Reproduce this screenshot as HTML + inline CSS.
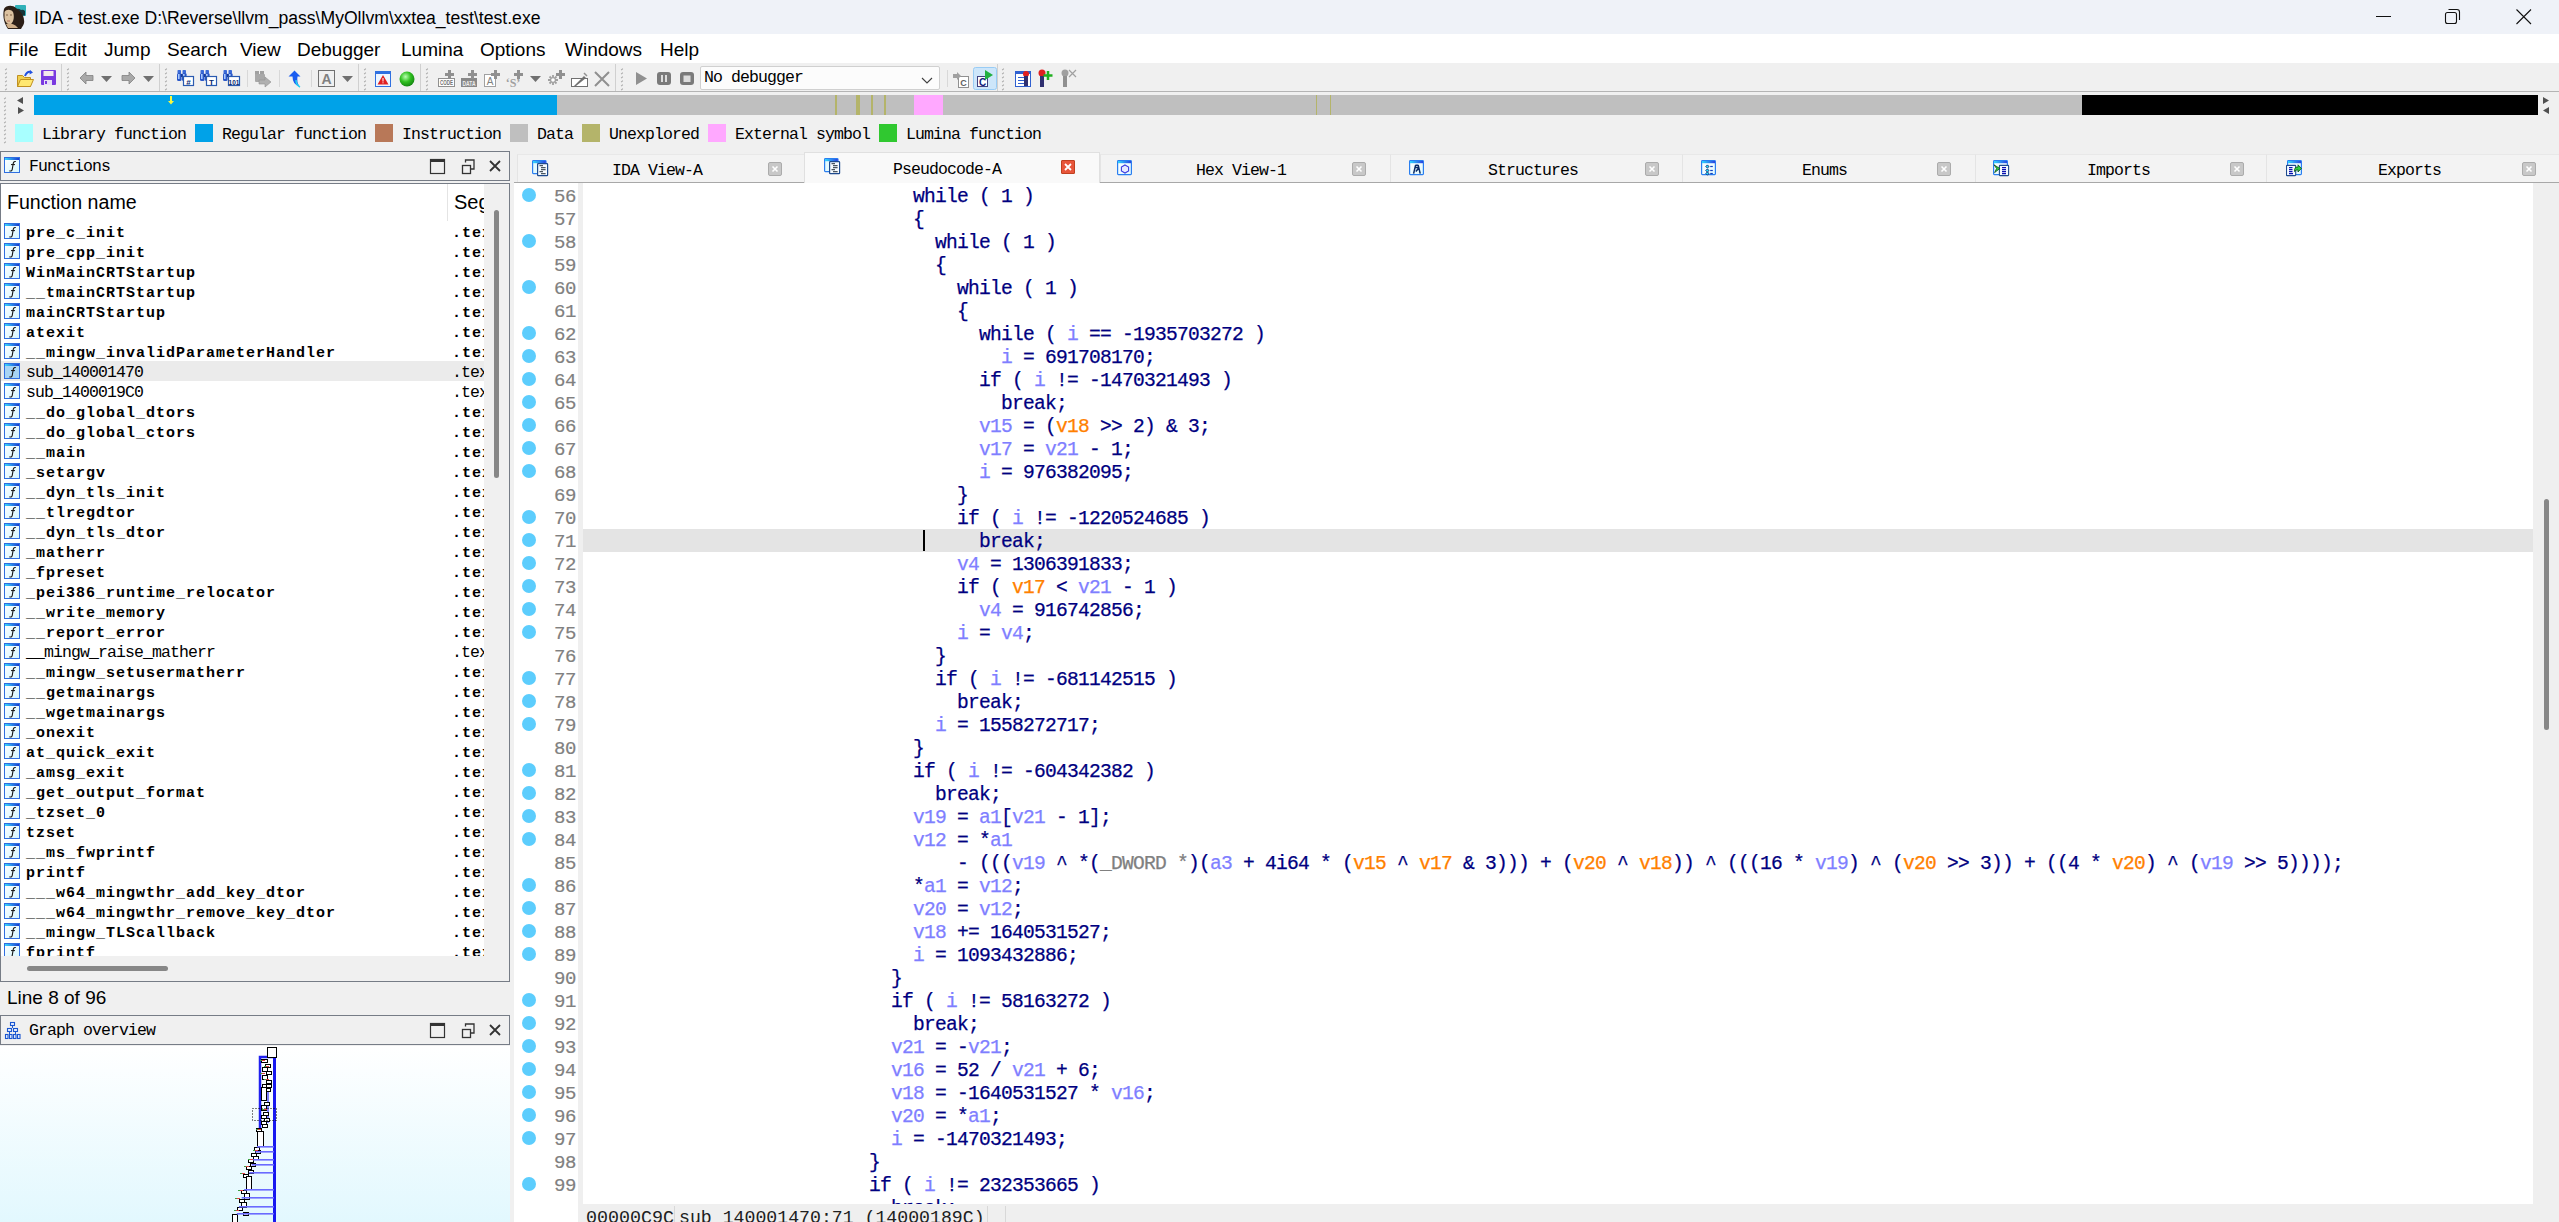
<!DOCTYPE html><html><head><meta charset="utf-8"><title>IDA</title><style>
*{margin:0;padding:0;box-sizing:border-box}
html,body{width:2559px;height:1222px;overflow:hidden}
body{position:relative;background:#f0f0f0;font-family:"Liberation Sans",sans-serif;color:#000}
.a{position:absolute}
.mono{font-family:"Liberation Mono",monospace}
.sim{font-family:"Liberation Mono",monospace;font-size:16.5px;letter-spacing:-0.9px;line-height:20px;white-space:pre}
.code{font-family:"Liberation Mono",monospace;font-size:19.6px;letter-spacing:-0.76px;line-height:23px;white-space:pre;color:#000080;-webkit-text-stroke:0.25px currentColor}
.k{color:#000080}
.v{color:#7f7fff}
.o{color:#ff8000}
.g{color:#808080}
.ln{font-family:"Liberation Mono",monospace;font-size:19px;letter-spacing:-0.4px;line-height:23px;color:#808080;text-align:right;width:60px;-webkit-text-stroke:0.2px currentColor}
.dot{width:14px;height:14px;border-radius:50%;background:#5ccdfd}
.fi{width:16px;height:16px;border:1px solid #2f6fe0;background:linear-gradient(#e8fbff,#d8f4ff)}
.fi:before{content:"";position:absolute;left:0;top:0;right:0;height:2px;background:linear-gradient(90deg,#30d0f8,#2040d0)}

.fn{font-family:"Liberation Mono",monospace;font-size:15px;white-space:pre;line-height:20px}
.fb{font-weight:bold;letter-spacing:1px}
.fr{font-size:16.5px;letter-spacing:-0.9px;margin-top:-1px}
.tab{font-family:"Liberation Mono",monospace;font-size:16.5px;letter-spacing:-0.9px;white-space:pre;color:#000}
.grip{width:3px;background:repeating-linear-gradient(#b8b8b8 0 2px,transparent 2px 5px)}
.vsep{width:1px;background:#c8c8c8}
.tcl{width:14px;height:14px;border-radius:2px;background:#c8c8c8;border:1px solid #a8a8a8}
.tcl:after{content:"\00d7";position:absolute;left:1px;top:-4px;font-size:15px;color:#fff;font-weight:bold;font-family:"Liberation Sans",sans-serif}
</style></head><body>
<svg width="0" height="0" style="position:absolute"><defs><linearGradient id="tbar" x1="0" x2="1"><stop offset="0" stop-color="#30d8ff"/><stop offset="1" stop-color="#2a40e0"/></linearGradient><linearGradient id="fbar" x1="0" x2="1"><stop offset="0" stop-color="#38d8ff"/><stop offset="1" stop-color="#1a3ad0"/></linearGradient><linearGradient id="fbg" x1="0" y1="0" x2="1" y2="1"><stop offset="0" stop-color="#ffffff"/><stop offset="1" stop-color="#d4f6ff"/></linearGradient><linearGradient id="tbg" x1="0" y1="0" x2="1" y2="1"><stop offset="0" stop-color="#ffffff"/><stop offset="1" stop-color="#e0faff"/></linearGradient></defs></svg>
<div class="a" style="left:0;top:0;width:2559px;height:34px;background:#eff2f8"></div>
<svg class="a" style="left:0;top:0" width="30" height="34" viewBox="0 0 30 34">
<rect x="15" y="5" width="11" height="11" rx="1" fill="#2fb0b8"/><path d="M16 9 Q19 8 21 10 Q23 9 25 11 V15.5 H16Z" fill="#163438"/>
<path d="M4 9 C6 5,13 5,16 8 C20 11,24 15,24 20 C25 24,22 27,21 29 L8 29 C5 25,2 17,4 9Z" fill="#2b1e16"/>
<path d="M4.5 12 C6 9,11 9,13 12 C14.5 16,14 21,11 24 C8 25,5 22,4.5 18 Z" fill="#dcc2a0"/>
<path d="M6 24 C9 23,14 23,18 28 L8 28Z" fill="#cfae88"/>
<path d="M6 15 h2 M10 15 h2" stroke="#6a4a30" stroke-width="0.8"/><path d="M7 21 h3" stroke="#b06050" stroke-width="0.8"/>
</svg>
<div class="a" style="left:34px;top:7px;font-size:17.6px;line-height:22px;color:#000">IDA - test.exe D:\Reverse\llvm_pass\MyOllvm\xxtea_test\test.exe</div>
<div class="a" style="left:2376px;top:16px;width:15px;height:1px;background:#111"></div>
<svg class="a" style="left:2440px;top:6px" width="24" height="22" viewBox="0 0 24 22">
<rect x="5.5" y="6.5" width="11" height="11" rx="2" fill="none" stroke="#111" stroke-width="1.1"/>
<path d="M8.5 3.5 H17 a2.5 2.5 0 0 1 2.5 2.5 V14" fill="none" stroke="#111" stroke-width="1.1"/></svg>
<svg class="a" style="left:2514px;top:7px" width="20" height="20" viewBox="0 0 20 20">
<path d="M2.5 2.5 L17 17 M17 2.5 L2.5 17" stroke="#111" stroke-width="1.1"/></svg>
<div class="a" style="left:0;top:34px;width:2559px;height:29px;background:#fff"></div>
<div class="a" style="left:8px;top:38px;font-size:19px;line-height:24px">File</div>
<div class="a" style="left:54px;top:38px;font-size:19px;line-height:24px">Edit</div>
<div class="a" style="left:104px;top:38px;font-size:19px;line-height:24px">Jump</div>
<div class="a" style="left:167px;top:38px;font-size:19px;line-height:24px">Search</div>
<div class="a" style="left:240px;top:38px;font-size:19px;line-height:24px">View</div>
<div class="a" style="left:297px;top:38px;font-size:19px;line-height:24px">Debugger</div>
<div class="a" style="left:401px;top:38px;font-size:19px;line-height:24px">Lumina</div>
<div class="a" style="left:480px;top:38px;font-size:19px;line-height:24px">Options</div>
<div class="a" style="left:565px;top:38px;font-size:19px;line-height:24px">Windows</div>
<div class="a" style="left:660px;top:38px;font-size:19px;line-height:24px">Help</div>
<div class="a" style="left:0;top:63px;width:2559px;height:29px;background:#f0f0f0;border-bottom:1px solid #b4b4b4"></div>
<svg class="a" style="left:0;top:0" width="1100" height="95" viewBox="0 0 1100 95"><path d="M5.2 70.2 l1.6 -1.6" stroke="#a8a8a8" stroke-width="1.1"/><path d="M5.2 74.2 l1.6 -1.6" stroke="#a8a8a8" stroke-width="1.1"/><path d="M5.2 78.2 l1.6 -1.6" stroke="#a8a8a8" stroke-width="1.1"/><path d="M5.2 82.2 l1.6 -1.6" stroke="#a8a8a8" stroke-width="1.1"/><path d="M5.2 86.2 l1.6 -1.6" stroke="#a8a8a8" stroke-width="1.1"/><path d="M5.2 90.2 l1.6 -1.6" stroke="#a8a8a8" stroke-width="1.1"/><path d="M67.2 70.2 l1.6 -1.6" stroke="#a8a8a8" stroke-width="1.1"/><path d="M67.2 74.2 l1.6 -1.6" stroke="#a8a8a8" stroke-width="1.1"/><path d="M67.2 78.2 l1.6 -1.6" stroke="#a8a8a8" stroke-width="1.1"/><path d="M67.2 82.2 l1.6 -1.6" stroke="#a8a8a8" stroke-width="1.1"/><path d="M67.2 86.2 l1.6 -1.6" stroke="#a8a8a8" stroke-width="1.1"/><path d="M67.2 90.2 l1.6 -1.6" stroke="#a8a8a8" stroke-width="1.1"/><path d="M165.2 70.2 l1.6 -1.6" stroke="#a8a8a8" stroke-width="1.1"/><path d="M165.2 74.2 l1.6 -1.6" stroke="#a8a8a8" stroke-width="1.1"/><path d="M165.2 78.2 l1.6 -1.6" stroke="#a8a8a8" stroke-width="1.1"/><path d="M165.2 82.2 l1.6 -1.6" stroke="#a8a8a8" stroke-width="1.1"/><path d="M165.2 86.2 l1.6 -1.6" stroke="#a8a8a8" stroke-width="1.1"/><path d="M165.2 90.2 l1.6 -1.6" stroke="#a8a8a8" stroke-width="1.1"/><path d="M364.2 70.2 l1.6 -1.6" stroke="#a8a8a8" stroke-width="1.1"/><path d="M364.2 74.2 l1.6 -1.6" stroke="#a8a8a8" stroke-width="1.1"/><path d="M364.2 78.2 l1.6 -1.6" stroke="#a8a8a8" stroke-width="1.1"/><path d="M364.2 82.2 l1.6 -1.6" stroke="#a8a8a8" stroke-width="1.1"/><path d="M364.2 86.2 l1.6 -1.6" stroke="#a8a8a8" stroke-width="1.1"/><path d="M364.2 90.2 l1.6 -1.6" stroke="#a8a8a8" stroke-width="1.1"/><path d="M426.2 70.2 l1.6 -1.6" stroke="#a8a8a8" stroke-width="1.1"/><path d="M426.2 74.2 l1.6 -1.6" stroke="#a8a8a8" stroke-width="1.1"/><path d="M426.2 78.2 l1.6 -1.6" stroke="#a8a8a8" stroke-width="1.1"/><path d="M426.2 82.2 l1.6 -1.6" stroke="#a8a8a8" stroke-width="1.1"/><path d="M426.2 86.2 l1.6 -1.6" stroke="#a8a8a8" stroke-width="1.1"/><path d="M426.2 90.2 l1.6 -1.6" stroke="#a8a8a8" stroke-width="1.1"/><path d="M621.2 70.2 l1.6 -1.6" stroke="#a8a8a8" stroke-width="1.1"/><path d="M621.2 74.2 l1.6 -1.6" stroke="#a8a8a8" stroke-width="1.1"/><path d="M621.2 78.2 l1.6 -1.6" stroke="#a8a8a8" stroke-width="1.1"/><path d="M621.2 82.2 l1.6 -1.6" stroke="#a8a8a8" stroke-width="1.1"/><path d="M621.2 86.2 l1.6 -1.6" stroke="#a8a8a8" stroke-width="1.1"/><path d="M621.2 90.2 l1.6 -1.6" stroke="#a8a8a8" stroke-width="1.1"/><path d="M1002.2 70.2 l1.6 -1.6" stroke="#a8a8a8" stroke-width="1.1"/><path d="M1002.2 74.2 l1.6 -1.6" stroke="#a8a8a8" stroke-width="1.1"/><path d="M1002.2 78.2 l1.6 -1.6" stroke="#a8a8a8" stroke-width="1.1"/><path d="M1002.2 82.2 l1.6 -1.6" stroke="#a8a8a8" stroke-width="1.1"/><path d="M1002.2 86.2 l1.6 -1.6" stroke="#a8a8a8" stroke-width="1.1"/><path d="M1002.2 90.2 l1.6 -1.6" stroke="#a8a8a8" stroke-width="1.1"/><rect x="61" y="64" width="1" height="27" fill="#d0d0d0"/><rect x="159" y="64" width="1" height="27" fill="#d0d0d0"/><rect x="358" y="64" width="1" height="27" fill="#d0d0d0"/><rect x="420" y="64" width="1" height="27" fill="#d0d0d0"/><rect x="615" y="64" width="1" height="27" fill="#d0d0d0"/><rect x="997" y="64" width="1" height="27" fill="#d0d0d0"/><rect x="247" y="70" width="1" height="17" fill="#d8d8d8"/><rect x="279" y="70" width="1" height="17" fill="#d8d8d8"/><rect x="311" y="70" width="1" height="17" fill="#d8d8d8"/><rect x="947" y="70" width="1" height="17" fill="#d8d8d8"/><path d="M17.5 75.5 h5 l2 2 h6 v9 h-13z" fill="#f0d050" stroke="#c09020"/><path d="M17.5 86.5 l3 -7 h13 l-3 7z" fill="#ffe870" stroke="#c09020"/><path d="M25 76 q2 -5 6 -4" stroke="#2050e0" stroke-width="2" fill="none"/><path d="M30 70 l3 2.5 l-3.5 2z" fill="#2050e0"/><rect x="41" y="70" width="15" height="15" fill="#7a3ae0" rx="1"/><rect x="43.5" y="71" width="10" height="5" fill="#f4e8ec"/><rect x="44" y="80" width="8" height="5" fill="#e8e0f8"/><rect x="45" y="81" width="2" height="3" fill="#7a3ae0"/><path d="M80 78 l6 -6 v3.5 h7 v5 h-7 v3.5z" fill="#a8a8a8" stroke="#808080" stroke-width="0.8"/><path d="M101 76 h11 l-5.5 6z" fill="#707070"/><path d="M135 78 l-6 -6 v3.5 h-7 v5 h7 v3.5z" fill="#a8a8a8" stroke="#808080" stroke-width="0.8"/><path d="M143 76 h11 l-5.5 6z" fill="#707070"/><rect x="177.5" y="70" width="3.5" height="3.5" rx="0.8" fill="#3a6ad8"/><rect x="182.5" y="70" width="3.5" height="3.5" rx="0.8" fill="#3a6ad8"/><rect x="177" y="73" width="4.6" height="8" rx="1.5" fill="#2a58c8"/><rect x="182" y="73" width="4.6" height="8" rx="1.5" fill="#2a58c8"/><rect x="178" y="74" width="1.6" height="5" fill="#a8c8ff"/><rect x="183" y="74" width="1.6" height="5" fill="#a8c8ff"/><rect x="181" y="74" width="1.5" height="3" fill="#1a3a90"/><rect x="183.5" y="76.5" width="10" height="9" fill="#fff" stroke="#2a5ab0" stroke-width="1.2"/><text x="188.5" y="84.6" font-size="8" font-family="Liberation Sans" font-weight="bold" text-anchor="middle" fill="#0a2a70">#</text><rect x="200.5" y="70" width="3.5" height="3.5" rx="0.8" fill="#3a6ad8"/><rect x="205.5" y="70" width="3.5" height="3.5" rx="0.8" fill="#3a6ad8"/><rect x="200" y="73" width="4.6" height="8" rx="1.5" fill="#2a58c8"/><rect x="205" y="73" width="4.6" height="8" rx="1.5" fill="#2a58c8"/><rect x="201" y="74" width="1.6" height="5" fill="#a8c8ff"/><rect x="206" y="74" width="1.6" height="5" fill="#a8c8ff"/><rect x="204" y="74" width="1.5" height="3" fill="#1a3a90"/><rect x="206.5" y="76.5" width="10" height="9" fill="#fff" stroke="#2a5ab0" stroke-width="1.2"/><text x="211.5" y="84.6" font-size="8" font-family="Liberation Sans" font-weight="bold" text-anchor="middle" fill="#0a2a70">T</text><rect x="223.5" y="70" width="3.5" height="3.5" rx="0.8" fill="#3a6ad8"/><rect x="228.5" y="70" width="3.5" height="3.5" rx="0.8" fill="#3a6ad8"/><rect x="223" y="73" width="4.6" height="8" rx="1.5" fill="#2a58c8"/><rect x="228" y="73" width="4.6" height="8" rx="1.5" fill="#2a58c8"/><rect x="224" y="74" width="1.6" height="5" fill="#a8c8ff"/><rect x="229" y="74" width="1.6" height="5" fill="#a8c8ff"/><rect x="227" y="74" width="1.5" height="3" fill="#1a3a90"/><rect x="228.5" y="76.5" width="11" height="9" fill="#fff" stroke="#2a5ab0" stroke-width="1.2"/><text x="234.0" y="84.6" font-size="6.5" font-family="Liberation Sans" font-weight="bold" text-anchor="middle" fill="#0a2a70">101</text><rect x="255" y="71" width="4" height="4" fill="#a0a0a0"/><rect x="260" y="71" width="4" height="4" fill="#a0a0a0"/><rect x="255" y="74" width="10" height="8" rx="1" fill="#a8a8a8"/><path d="M259 80 h6 v-3 l6 5 l-6 5 v-3 h-6z" fill="#b0b0b0" stroke="#909090" stroke-width="0.6"/><path d="M294.5 70.5 l-6 6 h4 q0 8 7 10 q-3 -4 -2 -10 h3z" fill="#1a5cf0"/><path d="M296 80 q0 5 4 7" stroke="#20d0f0" stroke-width="1.5" fill="none"/><rect x="318.5" y="70.5" width="16" height="16" fill="none" stroke="#707070"/><text x="326.5" y="84" font-size="14" font-family="Liberation Sans" font-weight="bold" text-anchor="middle" fill="#808080">A</text><path d="M342 76 h11 l-5.5 6z" fill="#707070"/><rect x="375.5" y="71.5" width="15" height="15" fill="#eef6ff" stroke="#3070e0"/><rect x="376" y="72" width="14" height="2" fill="#3070e0"/><path d="M383 75 l5.5 9.5 h-11z" fill="#e02020"/><rect x="382.5" y="78" width="1" height="3.5" fill="#fff"/><rect x="382.5" y="82.3" width="1" height="1" fill="#fff"/><defs><radialGradient id="gg" cx="0.4" cy="0.35" r="0.7"><stop offset="0" stop-color="#b8ffb0"/><stop offset="0.5" stop-color="#30c020"/><stop offset="1" stop-color="#108010"/></radialGradient></defs><circle cx="407" cy="79" r="7.5" fill="url(#gg)"/><rect x="438.5" y="78.5" width="16" height="8" fill="#fff" stroke="#909090"/><text x="440" y="85" font-size="7" font-family="Liberation Sans" font-weight="bold" textLength="13" lengthAdjust="spacingAndGlyphs" fill="#707070">CODE</text><rect x="448" y="70" width="3" height="9" fill="#909090"/><rect x="445" y="73" width="9" height="3" fill="#909090"/><rect x="461" y="78" width="16" height="9" fill="#888"/><text x="462.5" y="85.5" font-size="7" font-family="Liberation Sans" font-weight="bold" textLength="13" lengthAdjust="spacingAndGlyphs" fill="#eee">DATA</text><rect x="471" y="70" width="3" height="9" fill="#909090"/><rect x="468" y="73" width="9" height="3" fill="#909090"/><rect x="484.5" y="74.5" width="11" height="12" fill="#fff" stroke="#a0a0a0"/><text x="490" y="85" font-size="10" font-family="Liberation Sans" text-anchor="middle" fill="#808080">A</text><rect x="494" y="70" width="3" height="9" fill="#909090"/><rect x="491" y="73" width="9" height="3" fill="#909090"/><text x="513" y="87" font-size="12" font-family="Liberation Serif" font-weight="bold" text-anchor="middle" fill="#a0a0a0">‘S’</text><rect x="517" y="70" width="3" height="9" fill="#909090"/><rect x="514" y="73" width="9" height="3" fill="#909090"/><path d="M530 76 h11 l-5.5 6z" fill="#707070"/><path d="M553 75 v10 M548 80 h10 M549.5 76.5 l7 7 M556.5 76.5 l-7 7" stroke="#a0a0a0" stroke-width="1.8"/><circle cx="553" cy="80" r="1.8" fill="#fff"/><rect x="559" y="70" width="3" height="9" fill="#909090"/><rect x="556" y="73" width="9" height="3" fill="#909090"/><rect x="571.5" y="78.5" width="16" height="8" fill="#fff" stroke="#707070"/><path d="M574 86 l10 -10 l2 2 l-10 8z" fill="#707070"/><path d="M584 73 l3 3" stroke="#909090" stroke-width="1.5"/><path d="M595 72 l14 14 M609 72 l-14 14" stroke="#909090" stroke-width="2"/><path d="M636 72 l11 6.5 l-11 6.5z" fill="#909090"/><rect x="657" y="72" width="14" height="13" rx="3" fill="#7a7a7a"/><rect x="661" y="75" width="2" height="7" fill="#ddd"/><rect x="665" y="75" width="2" height="7" fill="#ddd"/><rect x="680" y="72" width="14" height="13" rx="3" fill="#7a7a7a"/><rect x="683.5" y="75.5" width="7" height="6.5" fill="#ddd"/><rect x="700.5" y="66.5" width="239" height="23" fill="#fcfcfc" stroke="#d0d0d0" rx="1.5"/><path d="M922 78 l5 5 l5 -5" stroke="#404040" stroke-width="1.1" fill="none"/><rect x="958.5" y="76.5" width="10" height="11" fill="#fff" stroke="#909090"/><text x="963.5" y="86" font-size="9" font-family="Liberation Sans" font-weight="bold" text-anchor="middle" fill="#606060">C</text><path d="M953 74 h4 v-2 l4 4 l-4 4 v-2 h-4z" fill="#a0a0a0"/><rect x="973.5" y="67.5" width="23" height="22" rx="2" fill="#cde6fa" stroke="#99ccf5"/><rect x="977.5" y="76.5" width="10" height="10" fill="#fff" stroke="#404080"/><text x="982.5" y="86" font-size="10" font-family="Liberation Sans" font-weight="bold" text-anchor="middle" fill="#102080">C</text><path d="M985 70 l8 5 l-8 5z" fill="#20b040"/><rect x="1015.5" y="71.5" width="15" height="15" fill="#fff" stroke="#3060d0"/><rect x="1016" y="72" width="14" height="2" fill="#3060d0"/><rect x="1018" y="77" width="6" height="1" fill="#3060d0"/><rect x="1018" y="80" width="6" height="1" fill="#3060d0"/><rect x="1018" y="83" width="6" height="1" fill="#3060d0"/><circle cx="1026" cy="74" r="3" fill="#e02020"/><rect x="1024" y="76" width="4" height="10" fill="#303070"/><circle cx="1042" cy="73" r="3.5" fill="#e02020"/><rect x="1040" y="76" width="4" height="11" fill="#303070"/><path d="M1048 71 v9 M1043.5 75.5 h9" stroke="#20b020" stroke-width="2.5"/><circle cx="1065" cy="73" r="3.5" fill="#a0a0a0"/><rect x="1063" y="76" width="4" height="11" fill="#909090"/><path d="M1069 70 l7 7 M1076 70 l-7 7" stroke="#a0a0a0" stroke-width="1.2"/></svg>
<div class="a sim" style="left:704px;top:68px;color:#000">No debugger</div>
<svg class="a" style="left:0;top:0" width="2559" height="150" viewBox="0 0 2559 150"><rect x="34" y="95" width="523" height="20" fill="#00a2e8"/><rect x="557" y="95" width="1525" height="20" fill="#bfbfbf"/><rect x="2082" y="95" width="456" height="20" fill="#000"/><rect x="835" y="95" width="2" height="20" fill="#b4b46a"/><rect x="856" y="95" width="4" height="20" fill="#b4b46a"/><rect x="871" y="95" width="2" height="20" fill="#b4b46a"/><rect x="884" y="95" width="2" height="20" fill="#b4b46a"/><rect x="1316" y="95" width="1" height="20" fill="#b4b46a"/><rect x="1330" y="95" width="1" height="20" fill="#b4b46a"/><rect x="914" y="95" width="29" height="20" fill="#ffa8ff"/><path d="M170 96 h2 v5 h2 l-3 3.5 l-3 -3.5 h2z" fill="#f8f840"/><path d="M23 97 v7 l-6 -3.5z" fill="#505050"/><path d="M18 107 v7 l6 -3.5z" fill="#505050"/><path d="M2543 97 v7 l6 -3.5z" fill="#505050"/><path d="M2549 107 v7 l-6 -3.5z" fill="#505050"/><path d="M4.2 99.2 l1.6 -1.6" stroke="#a8a8a8" stroke-width="1.1"/><path d="M4.2 103.2 l1.6 -1.6" stroke="#a8a8a8" stroke-width="1.1"/><path d="M4.2 107.2 l1.6 -1.6" stroke="#a8a8a8" stroke-width="1.1"/><path d="M4.2 111.2 l1.6 -1.6" stroke="#a8a8a8" stroke-width="1.1"/><path d="M4.2 115.2 l1.6 -1.6" stroke="#a8a8a8" stroke-width="1.1"/><path d="M4.2 119.2 l1.6 -1.6" stroke="#a8a8a8" stroke-width="1.1"/><path d="M4.2 123.2 l1.6 -1.6" stroke="#a8a8a8" stroke-width="1.1"/><path d="M4.2 127.2 l1.6 -1.6" stroke="#a8a8a8" stroke-width="1.1"/><path d="M4.2 131.2 l1.6 -1.6" stroke="#a8a8a8" stroke-width="1.1"/><path d="M4.2 135.2 l1.6 -1.6" stroke="#a8a8a8" stroke-width="1.1"/><path d="M4.2 139.2 l1.6 -1.6" stroke="#a8a8a8" stroke-width="1.1"/><path d="M4.2 143.2 l1.6 -1.6" stroke="#a8a8a8" stroke-width="1.1"/></svg>
<div class="a" style="left:15px;top:124px;width:18px;height:18px;background:#a8ffff"></div>
<div class="a sim" style="left:42px;top:125px">Library function</div>
<div class="a" style="left:195px;top:124px;width:18px;height:18px;background:#00a2e8"></div>
<div class="a sim" style="left:222px;top:125px">Regular function</div>
<div class="a" style="left:375px;top:124px;width:18px;height:18px;background:#b87858"></div>
<div class="a sim" style="left:402px;top:125px">Instruction</div>
<div class="a" style="left:510px;top:124px;width:18px;height:18px;background:#bfbfbf"></div>
<div class="a sim" style="left:537px;top:125px">Data</div>
<div class="a" style="left:582px;top:124px;width:18px;height:18px;background:#b4b46a"></div>
<div class="a sim" style="left:609px;top:125px">Unexplored</div>
<div class="a" style="left:708px;top:124px;width:18px;height:18px;background:#ffa8ff"></div>
<div class="a sim" style="left:735px;top:125px">External symbol</div>
<div class="a" style="left:879px;top:124px;width:18px;height:18px;background:#30c830"></div>
<div class="a sim" style="left:906px;top:125px">Lumina function</div>
<div class="a" style="left:0;top:151px;width:510px;height:30px;background:#f0f0f0;border:1px solid #767c86"></div>
<svg class="a" style="left:0;top:151px" width="510" height="30" viewBox="0 0 510 30"><rect x="430.5" y="8.5" width="14" height="14" fill="none" stroke="#333" stroke-width="1.2"/><rect x="430" y="8" width="15" height="3" fill="#333"/><rect x="462.5" y="14.5" width="8" height="8" fill="none" stroke="#333" stroke-width="1.3"/><path d="M465.5 11.5 V9 H474 V18 H471" fill="none" stroke="#333" stroke-width="1.3"/><path d="M490 10 l10 10 M500 10 l-10 10" stroke="#333" stroke-width="1.8"/></svg>
<div class="a sim" style="left:29px;top:157px">Functions</div>
<svg class="a" style="left:4px;top:157px" width="16" height="16" viewBox="0 0 16 16"><rect x="0.5" y="0.5" width="15" height="15" fill="url(#fbg)" stroke="#2f6ee0"/><rect x="1" y="1" width="14" height="2" fill="url(#fbar)"/><path d="M11.8 4.6 C10.6 4.2 9.6 4.8 9.3 6.2 L8.2 12.6 C7.9 13.9 6.8 14.4 5.4 13.8" fill="none" stroke="#151515" stroke-width="1.1"/><path d="M7 7.6 H11" stroke="#151515" stroke-width="1"/></svg>
<div class="a" style="left:0;top:183px;width:510px;height:799px;background:#f0f0f0;border:1px solid #767c86"></div>
<div class="a" style="left:1px;top:184px;width:483px;height:772px;background:#fff"></div>
<div class="a" style="left:484px;top:184px;width:25px;height:772px;background:#f0f0f0"></div>
<div class="a" style="left:494px;top:210px;width:5px;height:268px;background:#878787;border-radius:3px"></div>
<div class="a" style="left:27px;top:966px;width:141px;height:5px;background:#878787;border-radius:3px"></div>
<div class="a" style="left:7px;top:190px;font-size:19.6px;line-height:24px">Function name</div>
<div class="a" style="left:447px;top:184px;width:1px;height:37px;background:#e4e4e4"></div>
<div class="a" style="left:454px;top:190px;width:30px;overflow:hidden;font-size:20px;line-height:24px;white-space:nowrap">Segment</div>
<div class="a" style="left:0;top:184px;width:484px;height:772px;overflow:hidden"></div>
<div class="a" style="left:0;top:0;width:484px;height:956px;overflow:hidden;clip-path:inset(184px 0 0 0)"><svg class="a" style="left:4px;top:223px" width="16" height="16" viewBox="0 0 16 16"><rect x="0.5" y="0.5" width="15" height="15" fill="url(#fbg)" stroke="#2f6ee0"/><rect x="1" y="1" width="14" height="2" fill="url(#fbar)"/><path d="M11.8 4.6 C10.6 4.2 9.6 4.8 9.3 6.2 L8.2 12.6 C7.9 13.9 6.8 14.4 5.4 13.8" fill="none" stroke="#151515" stroke-width="1.1"/><path d="M7 7.6 H11" stroke="#151515" stroke-width="1"/></svg><div class="a fn fb" style="left:26px;top:224px;color:#000">pre_c_init</div><div class="a fn fb" style="left:452px;top:224px;width:32px;overflow:hidden;color:#000">.text</div><svg class="a" style="left:4px;top:243px" width="16" height="16" viewBox="0 0 16 16"><rect x="0.5" y="0.5" width="15" height="15" fill="url(#fbg)" stroke="#2f6ee0"/><rect x="1" y="1" width="14" height="2" fill="url(#fbar)"/><path d="M11.8 4.6 C10.6 4.2 9.6 4.8 9.3 6.2 L8.2 12.6 C7.9 13.9 6.8 14.4 5.4 13.8" fill="none" stroke="#151515" stroke-width="1.1"/><path d="M7 7.6 H11" stroke="#151515" stroke-width="1"/></svg><div class="a fn fb" style="left:26px;top:244px;color:#000">pre_cpp_init</div><div class="a fn fb" style="left:452px;top:244px;width:32px;overflow:hidden;color:#000">.text</div><svg class="a" style="left:4px;top:263px" width="16" height="16" viewBox="0 0 16 16"><rect x="0.5" y="0.5" width="15" height="15" fill="url(#fbg)" stroke="#2f6ee0"/><rect x="1" y="1" width="14" height="2" fill="url(#fbar)"/><path d="M11.8 4.6 C10.6 4.2 9.6 4.8 9.3 6.2 L8.2 12.6 C7.9 13.9 6.8 14.4 5.4 13.8" fill="none" stroke="#151515" stroke-width="1.1"/><path d="M7 7.6 H11" stroke="#151515" stroke-width="1"/></svg><div class="a fn fb" style="left:26px;top:264px;color:#000">WinMainCRTStartup</div><div class="a fn fb" style="left:452px;top:264px;width:32px;overflow:hidden;color:#000">.text</div><svg class="a" style="left:4px;top:283px" width="16" height="16" viewBox="0 0 16 16"><rect x="0.5" y="0.5" width="15" height="15" fill="url(#fbg)" stroke="#2f6ee0"/><rect x="1" y="1" width="14" height="2" fill="url(#fbar)"/><path d="M11.8 4.6 C10.6 4.2 9.6 4.8 9.3 6.2 L8.2 12.6 C7.9 13.9 6.8 14.4 5.4 13.8" fill="none" stroke="#151515" stroke-width="1.1"/><path d="M7 7.6 H11" stroke="#151515" stroke-width="1"/></svg><div class="a fn fb" style="left:26px;top:284px;color:#000">__tmainCRTStartup</div><div class="a fn fb" style="left:452px;top:284px;width:32px;overflow:hidden;color:#000">.text</div><svg class="a" style="left:4px;top:303px" width="16" height="16" viewBox="0 0 16 16"><rect x="0.5" y="0.5" width="15" height="15" fill="url(#fbg)" stroke="#2f6ee0"/><rect x="1" y="1" width="14" height="2" fill="url(#fbar)"/><path d="M11.8 4.6 C10.6 4.2 9.6 4.8 9.3 6.2 L8.2 12.6 C7.9 13.9 6.8 14.4 5.4 13.8" fill="none" stroke="#151515" stroke-width="1.1"/><path d="M7 7.6 H11" stroke="#151515" stroke-width="1"/></svg><div class="a fn fb" style="left:26px;top:304px;color:#000">mainCRTStartup</div><div class="a fn fb" style="left:452px;top:304px;width:32px;overflow:hidden;color:#000">.text</div><svg class="a" style="left:4px;top:323px" width="16" height="16" viewBox="0 0 16 16"><rect x="0.5" y="0.5" width="15" height="15" fill="url(#fbg)" stroke="#2f6ee0"/><rect x="1" y="1" width="14" height="2" fill="url(#fbar)"/><path d="M11.8 4.6 C10.6 4.2 9.6 4.8 9.3 6.2 L8.2 12.6 C7.9 13.9 6.8 14.4 5.4 13.8" fill="none" stroke="#151515" stroke-width="1.1"/><path d="M7 7.6 H11" stroke="#151515" stroke-width="1"/></svg><div class="a fn fb" style="left:26px;top:324px;color:#000">atexit</div><div class="a fn fb" style="left:452px;top:324px;width:32px;overflow:hidden;color:#000">.text</div><svg class="a" style="left:4px;top:343px" width="16" height="16" viewBox="0 0 16 16"><rect x="0.5" y="0.5" width="15" height="15" fill="url(#fbg)" stroke="#2f6ee0"/><rect x="1" y="1" width="14" height="2" fill="url(#fbar)"/><path d="M11.8 4.6 C10.6 4.2 9.6 4.8 9.3 6.2 L8.2 12.6 C7.9 13.9 6.8 14.4 5.4 13.8" fill="none" stroke="#151515" stroke-width="1.1"/><path d="M7 7.6 H11" stroke="#151515" stroke-width="1"/></svg><div class="a fn fb" style="left:26px;top:344px;color:#000">__mingw_invalidParameterHandler</div><div class="a fn fb" style="left:452px;top:344px;width:32px;overflow:hidden;color:#000">.text</div><div class="a" style="left:1px;top:361px;width:483px;height:20px;background:#ebebeb"></div><svg class="a" style="left:4px;top:363px" width="16" height="16" viewBox="0 0 16 16"><rect x="0.5" y="0.5" width="15" height="15" fill="#a8d4f4" stroke="#2f6ee0"/><rect x="1" y="1" width="14" height="2" fill="url(#fbar)"/><path d="M11.8 4.6 C10.6 4.2 9.6 4.8 9.3 6.2 L8.2 12.6 C7.9 13.9 6.8 14.4 5.4 13.8" fill="none" stroke="#151515" stroke-width="1.1"/><path d="M7 7.6 H11" stroke="#151515" stroke-width="1"/></svg><div class="a fn fr" style="left:26px;top:364px;color:#000">sub_140001470</div><div class="a fn fr" style="left:452px;top:364px;width:32px;overflow:hidden;color:#000">.text</div><svg class="a" style="left:4px;top:383px" width="16" height="16" viewBox="0 0 16 16"><rect x="0.5" y="0.5" width="15" height="15" fill="url(#fbg)" stroke="#2f6ee0"/><rect x="1" y="1" width="14" height="2" fill="url(#fbar)"/><path d="M11.8 4.6 C10.6 4.2 9.6 4.8 9.3 6.2 L8.2 12.6 C7.9 13.9 6.8 14.4 5.4 13.8" fill="none" stroke="#151515" stroke-width="1.1"/><path d="M7 7.6 H11" stroke="#151515" stroke-width="1"/></svg><div class="a fn fr" style="left:26px;top:384px;color:#000">sub_1400019C0</div><div class="a fn fr" style="left:452px;top:384px;width:32px;overflow:hidden;color:#000">.text</div><svg class="a" style="left:4px;top:403px" width="16" height="16" viewBox="0 0 16 16"><rect x="0.5" y="0.5" width="15" height="15" fill="url(#fbg)" stroke="#2f6ee0"/><rect x="1" y="1" width="14" height="2" fill="url(#fbar)"/><path d="M11.8 4.6 C10.6 4.2 9.6 4.8 9.3 6.2 L8.2 12.6 C7.9 13.9 6.8 14.4 5.4 13.8" fill="none" stroke="#151515" stroke-width="1.1"/><path d="M7 7.6 H11" stroke="#151515" stroke-width="1"/></svg><div class="a fn fb" style="left:26px;top:404px;color:#000">__do_global_dtors</div><div class="a fn fb" style="left:452px;top:404px;width:32px;overflow:hidden;color:#000">.text</div><svg class="a" style="left:4px;top:423px" width="16" height="16" viewBox="0 0 16 16"><rect x="0.5" y="0.5" width="15" height="15" fill="url(#fbg)" stroke="#2f6ee0"/><rect x="1" y="1" width="14" height="2" fill="url(#fbar)"/><path d="M11.8 4.6 C10.6 4.2 9.6 4.8 9.3 6.2 L8.2 12.6 C7.9 13.9 6.8 14.4 5.4 13.8" fill="none" stroke="#151515" stroke-width="1.1"/><path d="M7 7.6 H11" stroke="#151515" stroke-width="1"/></svg><div class="a fn fb" style="left:26px;top:424px;color:#000">__do_global_ctors</div><div class="a fn fb" style="left:452px;top:424px;width:32px;overflow:hidden;color:#000">.text</div><svg class="a" style="left:4px;top:443px" width="16" height="16" viewBox="0 0 16 16"><rect x="0.5" y="0.5" width="15" height="15" fill="url(#fbg)" stroke="#2f6ee0"/><rect x="1" y="1" width="14" height="2" fill="url(#fbar)"/><path d="M11.8 4.6 C10.6 4.2 9.6 4.8 9.3 6.2 L8.2 12.6 C7.9 13.9 6.8 14.4 5.4 13.8" fill="none" stroke="#151515" stroke-width="1.1"/><path d="M7 7.6 H11" stroke="#151515" stroke-width="1"/></svg><div class="a fn fb" style="left:26px;top:444px;color:#000">__main</div><div class="a fn fb" style="left:452px;top:444px;width:32px;overflow:hidden;color:#000">.text</div><svg class="a" style="left:4px;top:463px" width="16" height="16" viewBox="0 0 16 16"><rect x="0.5" y="0.5" width="15" height="15" fill="url(#fbg)" stroke="#2f6ee0"/><rect x="1" y="1" width="14" height="2" fill="url(#fbar)"/><path d="M11.8 4.6 C10.6 4.2 9.6 4.8 9.3 6.2 L8.2 12.6 C7.9 13.9 6.8 14.4 5.4 13.8" fill="none" stroke="#151515" stroke-width="1.1"/><path d="M7 7.6 H11" stroke="#151515" stroke-width="1"/></svg><div class="a fn fb" style="left:26px;top:464px;color:#000">_setargv</div><div class="a fn fb" style="left:452px;top:464px;width:32px;overflow:hidden;color:#000">.text</div><svg class="a" style="left:4px;top:483px" width="16" height="16" viewBox="0 0 16 16"><rect x="0.5" y="0.5" width="15" height="15" fill="url(#fbg)" stroke="#2f6ee0"/><rect x="1" y="1" width="14" height="2" fill="url(#fbar)"/><path d="M11.8 4.6 C10.6 4.2 9.6 4.8 9.3 6.2 L8.2 12.6 C7.9 13.9 6.8 14.4 5.4 13.8" fill="none" stroke="#151515" stroke-width="1.1"/><path d="M7 7.6 H11" stroke="#151515" stroke-width="1"/></svg><div class="a fn fb" style="left:26px;top:484px;color:#000">__dyn_tls_init</div><div class="a fn fb" style="left:452px;top:484px;width:32px;overflow:hidden;color:#000">.text</div><svg class="a" style="left:4px;top:503px" width="16" height="16" viewBox="0 0 16 16"><rect x="0.5" y="0.5" width="15" height="15" fill="url(#fbg)" stroke="#2f6ee0"/><rect x="1" y="1" width="14" height="2" fill="url(#fbar)"/><path d="M11.8 4.6 C10.6 4.2 9.6 4.8 9.3 6.2 L8.2 12.6 C7.9 13.9 6.8 14.4 5.4 13.8" fill="none" stroke="#151515" stroke-width="1.1"/><path d="M7 7.6 H11" stroke="#151515" stroke-width="1"/></svg><div class="a fn fb" style="left:26px;top:504px;color:#000">__tlregdtor</div><div class="a fn fb" style="left:452px;top:504px;width:32px;overflow:hidden;color:#000">.text</div><svg class="a" style="left:4px;top:523px" width="16" height="16" viewBox="0 0 16 16"><rect x="0.5" y="0.5" width="15" height="15" fill="url(#fbg)" stroke="#2f6ee0"/><rect x="1" y="1" width="14" height="2" fill="url(#fbar)"/><path d="M11.8 4.6 C10.6 4.2 9.6 4.8 9.3 6.2 L8.2 12.6 C7.9 13.9 6.8 14.4 5.4 13.8" fill="none" stroke="#151515" stroke-width="1.1"/><path d="M7 7.6 H11" stroke="#151515" stroke-width="1"/></svg><div class="a fn fb" style="left:26px;top:524px;color:#000">__dyn_tls_dtor</div><div class="a fn fb" style="left:452px;top:524px;width:32px;overflow:hidden;color:#000">.text</div><svg class="a" style="left:4px;top:543px" width="16" height="16" viewBox="0 0 16 16"><rect x="0.5" y="0.5" width="15" height="15" fill="url(#fbg)" stroke="#2f6ee0"/><rect x="1" y="1" width="14" height="2" fill="url(#fbar)"/><path d="M11.8 4.6 C10.6 4.2 9.6 4.8 9.3 6.2 L8.2 12.6 C7.9 13.9 6.8 14.4 5.4 13.8" fill="none" stroke="#151515" stroke-width="1.1"/><path d="M7 7.6 H11" stroke="#151515" stroke-width="1"/></svg><div class="a fn fb" style="left:26px;top:544px;color:#000">_matherr</div><div class="a fn fb" style="left:452px;top:544px;width:32px;overflow:hidden;color:#000">.text</div><svg class="a" style="left:4px;top:563px" width="16" height="16" viewBox="0 0 16 16"><rect x="0.5" y="0.5" width="15" height="15" fill="url(#fbg)" stroke="#2f6ee0"/><rect x="1" y="1" width="14" height="2" fill="url(#fbar)"/><path d="M11.8 4.6 C10.6 4.2 9.6 4.8 9.3 6.2 L8.2 12.6 C7.9 13.9 6.8 14.4 5.4 13.8" fill="none" stroke="#151515" stroke-width="1.1"/><path d="M7 7.6 H11" stroke="#151515" stroke-width="1"/></svg><div class="a fn fb" style="left:26px;top:564px;color:#000">_fpreset</div><div class="a fn fb" style="left:452px;top:564px;width:32px;overflow:hidden;color:#000">.text</div><svg class="a" style="left:4px;top:583px" width="16" height="16" viewBox="0 0 16 16"><rect x="0.5" y="0.5" width="15" height="15" fill="url(#fbg)" stroke="#2f6ee0"/><rect x="1" y="1" width="14" height="2" fill="url(#fbar)"/><path d="M11.8 4.6 C10.6 4.2 9.6 4.8 9.3 6.2 L8.2 12.6 C7.9 13.9 6.8 14.4 5.4 13.8" fill="none" stroke="#151515" stroke-width="1.1"/><path d="M7 7.6 H11" stroke="#151515" stroke-width="1"/></svg><div class="a fn fb" style="left:26px;top:584px;color:#000">_pei386_runtime_relocator</div><div class="a fn fb" style="left:452px;top:584px;width:32px;overflow:hidden;color:#000">.text</div><svg class="a" style="left:4px;top:603px" width="16" height="16" viewBox="0 0 16 16"><rect x="0.5" y="0.5" width="15" height="15" fill="url(#fbg)" stroke="#2f6ee0"/><rect x="1" y="1" width="14" height="2" fill="url(#fbar)"/><path d="M11.8 4.6 C10.6 4.2 9.6 4.8 9.3 6.2 L8.2 12.6 C7.9 13.9 6.8 14.4 5.4 13.8" fill="none" stroke="#151515" stroke-width="1.1"/><path d="M7 7.6 H11" stroke="#151515" stroke-width="1"/></svg><div class="a fn fb" style="left:26px;top:604px;color:#000">__write_memory</div><div class="a fn fb" style="left:452px;top:604px;width:32px;overflow:hidden;color:#000">.text</div><svg class="a" style="left:4px;top:623px" width="16" height="16" viewBox="0 0 16 16"><rect x="0.5" y="0.5" width="15" height="15" fill="url(#fbg)" stroke="#2f6ee0"/><rect x="1" y="1" width="14" height="2" fill="url(#fbar)"/><path d="M11.8 4.6 C10.6 4.2 9.6 4.8 9.3 6.2 L8.2 12.6 C7.9 13.9 6.8 14.4 5.4 13.8" fill="none" stroke="#151515" stroke-width="1.1"/><path d="M7 7.6 H11" stroke="#151515" stroke-width="1"/></svg><div class="a fn fb" style="left:26px;top:624px;color:#000">__report_error</div><div class="a fn fb" style="left:452px;top:624px;width:32px;overflow:hidden;color:#000">.text</div><svg class="a" style="left:4px;top:643px" width="16" height="16" viewBox="0 0 16 16"><rect x="0.5" y="0.5" width="15" height="15" fill="url(#fbg)" stroke="#2f6ee0"/><rect x="1" y="1" width="14" height="2" fill="url(#fbar)"/><path d="M11.8 4.6 C10.6 4.2 9.6 4.8 9.3 6.2 L8.2 12.6 C7.9 13.9 6.8 14.4 5.4 13.8" fill="none" stroke="#151515" stroke-width="1.1"/><path d="M7 7.6 H11" stroke="#151515" stroke-width="1"/></svg><div class="a fn fr" style="left:26px;top:644px;color:#000">__mingw_raise_matherr</div><div class="a fn fr" style="left:452px;top:644px;width:32px;overflow:hidden;color:#000">.text</div><svg class="a" style="left:4px;top:663px" width="16" height="16" viewBox="0 0 16 16"><rect x="0.5" y="0.5" width="15" height="15" fill="url(#fbg)" stroke="#2f6ee0"/><rect x="1" y="1" width="14" height="2" fill="url(#fbar)"/><path d="M11.8 4.6 C10.6 4.2 9.6 4.8 9.3 6.2 L8.2 12.6 C7.9 13.9 6.8 14.4 5.4 13.8" fill="none" stroke="#151515" stroke-width="1.1"/><path d="M7 7.6 H11" stroke="#151515" stroke-width="1"/></svg><div class="a fn fb" style="left:26px;top:664px;color:#000">__mingw_setusermatherr</div><div class="a fn fb" style="left:452px;top:664px;width:32px;overflow:hidden;color:#000">.text</div><svg class="a" style="left:4px;top:683px" width="16" height="16" viewBox="0 0 16 16"><rect x="0.5" y="0.5" width="15" height="15" fill="url(#fbg)" stroke="#2f6ee0"/><rect x="1" y="1" width="14" height="2" fill="url(#fbar)"/><path d="M11.8 4.6 C10.6 4.2 9.6 4.8 9.3 6.2 L8.2 12.6 C7.9 13.9 6.8 14.4 5.4 13.8" fill="none" stroke="#151515" stroke-width="1.1"/><path d="M7 7.6 H11" stroke="#151515" stroke-width="1"/></svg><div class="a fn fb" style="left:26px;top:684px;color:#000">__getmainargs</div><div class="a fn fb" style="left:452px;top:684px;width:32px;overflow:hidden;color:#000">.text</div><svg class="a" style="left:4px;top:703px" width="16" height="16" viewBox="0 0 16 16"><rect x="0.5" y="0.5" width="15" height="15" fill="url(#fbg)" stroke="#2f6ee0"/><rect x="1" y="1" width="14" height="2" fill="url(#fbar)"/><path d="M11.8 4.6 C10.6 4.2 9.6 4.8 9.3 6.2 L8.2 12.6 C7.9 13.9 6.8 14.4 5.4 13.8" fill="none" stroke="#151515" stroke-width="1.1"/><path d="M7 7.6 H11" stroke="#151515" stroke-width="1"/></svg><div class="a fn fb" style="left:26px;top:704px;color:#000">__wgetmainargs</div><div class="a fn fb" style="left:452px;top:704px;width:32px;overflow:hidden;color:#000">.text</div><svg class="a" style="left:4px;top:723px" width="16" height="16" viewBox="0 0 16 16"><rect x="0.5" y="0.5" width="15" height="15" fill="url(#fbg)" stroke="#2f6ee0"/><rect x="1" y="1" width="14" height="2" fill="url(#fbar)"/><path d="M11.8 4.6 C10.6 4.2 9.6 4.8 9.3 6.2 L8.2 12.6 C7.9 13.9 6.8 14.4 5.4 13.8" fill="none" stroke="#151515" stroke-width="1.1"/><path d="M7 7.6 H11" stroke="#151515" stroke-width="1"/></svg><div class="a fn fb" style="left:26px;top:724px;color:#000">_onexit</div><div class="a fn fb" style="left:452px;top:724px;width:32px;overflow:hidden;color:#000">.text</div><svg class="a" style="left:4px;top:743px" width="16" height="16" viewBox="0 0 16 16"><rect x="0.5" y="0.5" width="15" height="15" fill="url(#fbg)" stroke="#2f6ee0"/><rect x="1" y="1" width="14" height="2" fill="url(#fbar)"/><path d="M11.8 4.6 C10.6 4.2 9.6 4.8 9.3 6.2 L8.2 12.6 C7.9 13.9 6.8 14.4 5.4 13.8" fill="none" stroke="#151515" stroke-width="1.1"/><path d="M7 7.6 H11" stroke="#151515" stroke-width="1"/></svg><div class="a fn fb" style="left:26px;top:744px;color:#000">at_quick_exit</div><div class="a fn fb" style="left:452px;top:744px;width:32px;overflow:hidden;color:#000">.text</div><svg class="a" style="left:4px;top:763px" width="16" height="16" viewBox="0 0 16 16"><rect x="0.5" y="0.5" width="15" height="15" fill="url(#fbg)" stroke="#2f6ee0"/><rect x="1" y="1" width="14" height="2" fill="url(#fbar)"/><path d="M11.8 4.6 C10.6 4.2 9.6 4.8 9.3 6.2 L8.2 12.6 C7.9 13.9 6.8 14.4 5.4 13.8" fill="none" stroke="#151515" stroke-width="1.1"/><path d="M7 7.6 H11" stroke="#151515" stroke-width="1"/></svg><div class="a fn fb" style="left:26px;top:764px;color:#000">_amsg_exit</div><div class="a fn fb" style="left:452px;top:764px;width:32px;overflow:hidden;color:#000">.text</div><svg class="a" style="left:4px;top:783px" width="16" height="16" viewBox="0 0 16 16"><rect x="0.5" y="0.5" width="15" height="15" fill="url(#fbg)" stroke="#2f6ee0"/><rect x="1" y="1" width="14" height="2" fill="url(#fbar)"/><path d="M11.8 4.6 C10.6 4.2 9.6 4.8 9.3 6.2 L8.2 12.6 C7.9 13.9 6.8 14.4 5.4 13.8" fill="none" stroke="#151515" stroke-width="1.1"/><path d="M7 7.6 H11" stroke="#151515" stroke-width="1"/></svg><div class="a fn fb" style="left:26px;top:784px;color:#000">_get_output_format</div><div class="a fn fb" style="left:452px;top:784px;width:32px;overflow:hidden;color:#000">.text</div><svg class="a" style="left:4px;top:803px" width="16" height="16" viewBox="0 0 16 16"><rect x="0.5" y="0.5" width="15" height="15" fill="url(#fbg)" stroke="#2f6ee0"/><rect x="1" y="1" width="14" height="2" fill="url(#fbar)"/><path d="M11.8 4.6 C10.6 4.2 9.6 4.8 9.3 6.2 L8.2 12.6 C7.9 13.9 6.8 14.4 5.4 13.8" fill="none" stroke="#151515" stroke-width="1.1"/><path d="M7 7.6 H11" stroke="#151515" stroke-width="1"/></svg><div class="a fn fb" style="left:26px;top:804px;color:#000">_tzset_0</div><div class="a fn fb" style="left:452px;top:804px;width:32px;overflow:hidden;color:#000">.text</div><svg class="a" style="left:4px;top:823px" width="16" height="16" viewBox="0 0 16 16"><rect x="0.5" y="0.5" width="15" height="15" fill="url(#fbg)" stroke="#2f6ee0"/><rect x="1" y="1" width="14" height="2" fill="url(#fbar)"/><path d="M11.8 4.6 C10.6 4.2 9.6 4.8 9.3 6.2 L8.2 12.6 C7.9 13.9 6.8 14.4 5.4 13.8" fill="none" stroke="#151515" stroke-width="1.1"/><path d="M7 7.6 H11" stroke="#151515" stroke-width="1"/></svg><div class="a fn fb" style="left:26px;top:824px;color:#000">tzset</div><div class="a fn fb" style="left:452px;top:824px;width:32px;overflow:hidden;color:#000">.text</div><svg class="a" style="left:4px;top:843px" width="16" height="16" viewBox="0 0 16 16"><rect x="0.5" y="0.5" width="15" height="15" fill="url(#fbg)" stroke="#2f6ee0"/><rect x="1" y="1" width="14" height="2" fill="url(#fbar)"/><path d="M11.8 4.6 C10.6 4.2 9.6 4.8 9.3 6.2 L8.2 12.6 C7.9 13.9 6.8 14.4 5.4 13.8" fill="none" stroke="#151515" stroke-width="1.1"/><path d="M7 7.6 H11" stroke="#151515" stroke-width="1"/></svg><div class="a fn fb" style="left:26px;top:844px;color:#000">__ms_fwprintf</div><div class="a fn fb" style="left:452px;top:844px;width:32px;overflow:hidden;color:#000">.text</div><svg class="a" style="left:4px;top:863px" width="16" height="16" viewBox="0 0 16 16"><rect x="0.5" y="0.5" width="15" height="15" fill="url(#fbg)" stroke="#2f6ee0"/><rect x="1" y="1" width="14" height="2" fill="url(#fbar)"/><path d="M11.8 4.6 C10.6 4.2 9.6 4.8 9.3 6.2 L8.2 12.6 C7.9 13.9 6.8 14.4 5.4 13.8" fill="none" stroke="#151515" stroke-width="1.1"/><path d="M7 7.6 H11" stroke="#151515" stroke-width="1"/></svg><div class="a fn fb" style="left:26px;top:864px;color:#000">printf</div><div class="a fn fb" style="left:452px;top:864px;width:32px;overflow:hidden;color:#000">.text</div><svg class="a" style="left:4px;top:883px" width="16" height="16" viewBox="0 0 16 16"><rect x="0.5" y="0.5" width="15" height="15" fill="url(#fbg)" stroke="#2f6ee0"/><rect x="1" y="1" width="14" height="2" fill="url(#fbar)"/><path d="M11.8 4.6 C10.6 4.2 9.6 4.8 9.3 6.2 L8.2 12.6 C7.9 13.9 6.8 14.4 5.4 13.8" fill="none" stroke="#151515" stroke-width="1.1"/><path d="M7 7.6 H11" stroke="#151515" stroke-width="1"/></svg><div class="a fn fb" style="left:26px;top:884px;color:#000">___w64_mingwthr_add_key_dtor</div><div class="a fn fb" style="left:452px;top:884px;width:32px;overflow:hidden;color:#000">.text</div><svg class="a" style="left:4px;top:903px" width="16" height="16" viewBox="0 0 16 16"><rect x="0.5" y="0.5" width="15" height="15" fill="url(#fbg)" stroke="#2f6ee0"/><rect x="1" y="1" width="14" height="2" fill="url(#fbar)"/><path d="M11.8 4.6 C10.6 4.2 9.6 4.8 9.3 6.2 L8.2 12.6 C7.9 13.9 6.8 14.4 5.4 13.8" fill="none" stroke="#151515" stroke-width="1.1"/><path d="M7 7.6 H11" stroke="#151515" stroke-width="1"/></svg><div class="a fn fb" style="left:26px;top:904px;color:#000">___w64_mingwthr_remove_key_dtor</div><div class="a fn fb" style="left:452px;top:904px;width:32px;overflow:hidden;color:#000">.text</div><svg class="a" style="left:4px;top:923px" width="16" height="16" viewBox="0 0 16 16"><rect x="0.5" y="0.5" width="15" height="15" fill="url(#fbg)" stroke="#2f6ee0"/><rect x="1" y="1" width="14" height="2" fill="url(#fbar)"/><path d="M11.8 4.6 C10.6 4.2 9.6 4.8 9.3 6.2 L8.2 12.6 C7.9 13.9 6.8 14.4 5.4 13.8" fill="none" stroke="#151515" stroke-width="1.1"/><path d="M7 7.6 H11" stroke="#151515" stroke-width="1"/></svg><div class="a fn fb" style="left:26px;top:924px;color:#000">__mingw_TLScallback</div><div class="a fn fb" style="left:452px;top:924px;width:32px;overflow:hidden;color:#000">.text</div><svg class="a" style="left:4px;top:943px" width="16" height="16" viewBox="0 0 16 16"><rect x="0.5" y="0.5" width="15" height="15" fill="url(#fbg)" stroke="#2f6ee0"/><rect x="1" y="1" width="14" height="2" fill="url(#fbar)"/><path d="M11.8 4.6 C10.6 4.2 9.6 4.8 9.3 6.2 L8.2 12.6 C7.9 13.9 6.8 14.4 5.4 13.8" fill="none" stroke="#151515" stroke-width="1.1"/><path d="M7 7.6 H11" stroke="#151515" stroke-width="1"/></svg><div class="a fn fb" style="left:26px;top:944px;color:#000">fprintf</div><div class="a fn fb" style="left:452px;top:944px;width:32px;overflow:hidden;color:#000">.text</div></div>
<div class="a" style="left:7px;top:986px;font-size:19px;line-height:24px">Line 8 of 96</div>
<div class="a" style="left:0;top:1015px;width:510px;height:30px;background:#f0f0f0;border:1px solid #767c86"></div>
<svg class="a" style="left:0;top:1015px" width="510" height="30" viewBox="0 0 510 30"><g fill="#e8f0ff" stroke="#1a56d0" stroke-width="1.1"><rect x="10.5" y="7.5" width="4" height="3"/><rect x="7.5" y="13.5" width="4" height="3"/><rect x="13.5" y="13.5" width="4" height="3"/><rect x="5.5" y="19.5" width="2.5" height="4"/><rect x="9.5" y="19.5" width="2.5" height="4"/><rect x="13.5" y="19.5" width="2.5" height="4"/><rect x="17.5" y="19.5" width="2.5" height="4"/></g><path d="M12.5 11 v2 M9.5 17 v2.5 M15.5 17 v2.5" stroke="#1a56d0"/><rect x="430.5" y="8.5" width="14" height="14" fill="none" stroke="#333" stroke-width="1.2"/><rect x="430" y="8" width="15" height="3" fill="#333"/><rect x="462.5" y="14.5" width="8" height="8" fill="none" stroke="#333" stroke-width="1.3"/><path d="M465.5 11.5 V9 H474 V18 H471" fill="none" stroke="#333" stroke-width="1.3"/><path d="M490 10 l10 10 M500 10 l-10 10" stroke="#333" stroke-width="1.8"/></svg>
<div class="a sim" style="left:29px;top:1021px">Graph overview</div>
<div class="a" style="left:0;top:1046px;width:510px;height:176px;background:linear-gradient(#ffffff,#e2f8fe)"></div>
<svg class="a" style="left:0;top:0" width="510" height="1222" viewBox="0 0 510 1222"><path d="M260 1128 V1057 H275" fill="none" stroke="#2020f0" stroke-width="2.5"/><rect x="267" y="1085" width="2" height="38" fill="#8080ff"/><rect x="273" y="1056" width="3" height="166" fill="#1818f0"/><rect x="267.5" y="1047.5" width="9" height="10" fill="#fff" stroke="#000"/><rect x="261.5" y="1059.5" width="6" height="3" fill="#fff" stroke="#000" stroke-width="1"/><rect x="265.5" y="1064.5" width="5" height="3" fill="#fff" stroke="#000" stroke-width="1"/><rect x="262.5" y="1067.5" width="5" height="4" fill="#fff" stroke="#000" stroke-width="1"/><rect x="266.5" y="1071.5" width="5" height="3" fill="#fff" stroke="#000" stroke-width="1"/><rect x="262.5" y="1075.5" width="5" height="4" fill="#fff" stroke="#000" stroke-width="1"/><rect x="266.5" y="1080.5" width="5" height="3" fill="#fff" stroke="#000" stroke-width="1"/><rect x="262.5" y="1084.5" width="4" height="3" fill="#fff" stroke="#000" stroke-width="1"/><rect x="266.5" y="1084.5" width="5" height="3" fill="#fff" stroke="#000" stroke-width="1"/><rect x="265.5" y="1088.5" width="5" height="3" fill="#fff" stroke="#000" stroke-width="1"/><rect x="261.5" y="1087.5" width="5" height="13" fill="#fff" stroke="#000" stroke-width="1"/><rect x="264.5" y="1102.5" width="5" height="3" fill="#fff" stroke="#000" stroke-width="1"/><rect x="261.5" y="1105.5" width="5" height="5" fill="#fff" stroke="#000" stroke-width="1"/><rect x="263.5" y="1112.5" width="5" height="3" fill="#fff" stroke="#000" stroke-width="1"/><rect x="261.5" y="1115.5" width="5" height="3" fill="#fff" stroke="#000" stroke-width="1"/><rect x="264.5" y="1118.5" width="5" height="3" fill="#fff" stroke="#000" stroke-width="1"/><rect x="261.5" y="1121.5" width="5" height="3" fill="#fff" stroke="#000" stroke-width="1"/><rect x="262.5" y="1124.5" width="5" height="3" fill="#fff" stroke="#000" stroke-width="1"/><rect x="256.5" y="1128.5" width="5" height="3" fill="#fff" stroke="#000" stroke-width="1"/><rect x="257.5" y="1131.5" width="6" height="15" fill="#fff" stroke="#000" stroke-width="1"/><rect x="254.5" y="1147.5" width="5" height="3" fill="#fff" stroke="#000" stroke-width="1"/><rect x="255.5" y="1150.5" width="5" height="3" fill="#fff" stroke="#000" stroke-width="1"/><rect x="251.5" y="1153.5" width="5" height="3" fill="#fff" stroke="#000" stroke-width="1"/><rect x="253.5" y="1156.5" width="5" height="3" fill="#fff" stroke="#000" stroke-width="1"/><rect x="248.5" y="1159.5" width="5" height="3" fill="#fff" stroke="#000" stroke-width="1"/><rect x="250.5" y="1163.5" width="5" height="3" fill="#fff" stroke="#000" stroke-width="1"/><rect x="246.5" y="1166.5" width="5" height="3" fill="#fff" stroke="#000" stroke-width="1"/><rect x="248.5" y="1170.5" width="5" height="3" fill="#fff" stroke="#000" stroke-width="1"/><rect x="243.5" y="1174.5" width="5" height="3" fill="#fff" stroke="#000" stroke-width="1"/><rect x="246.5" y="1176.5" width="5" height="13" fill="#fff" stroke="#000" stroke-width="1"/><rect x="241.5" y="1190.5" width="5" height="3" fill="#fff" stroke="#000" stroke-width="1"/><rect x="244.5" y="1193.5" width="5" height="6" fill="#fff" stroke="#000" stroke-width="1"/><rect x="239.5" y="1199.5" width="5" height="3" fill="#fff" stroke="#000" stroke-width="1"/><rect x="241.5" y="1202.5" width="5" height="5" fill="#fff" stroke="#000" stroke-width="1"/><rect x="237.5" y="1207.5" width="5" height="3" fill="#fff" stroke="#000" stroke-width="1"/><rect x="243.5" y="1212.5" width="5" height="3" fill="#fff" stroke="#000" stroke-width="1"/><rect x="232.5" y="1214.5" width="5" height="8" fill="#fff" stroke="#000" stroke-width="1"/><rect x="257.0" y="1146" width="17.0" height="1.6" fill="#6a6aff"/><rect x="255.5" y="1151" width="18.5" height="1.6" fill="#6a6aff"/><rect x="253.1" y="1159" width="20.9" height="1.6" fill="#6a6aff"/><rect x="251.6" y="1164" width="22.4" height="1.6" fill="#6a6aff"/><rect x="249.2" y="1172" width="24.8" height="1.6" fill="#6a6aff"/><rect x="244.1" y="1189" width="29.9" height="1.6" fill="#6a6aff"/><rect x="241.7" y="1197" width="32.3" height="1.6" fill="#6a6aff"/><rect x="239.0" y="1206" width="35.0" height="1.6" fill="#6a6aff"/><rect x="236.9" y="1213" width="37.1" height="1.6" fill="#6a6aff"/><rect x="252.5" y="1108.5" width="24" height="12" fill="none" stroke="#000" stroke-width="1" stroke-dasharray="1 2"/><rect x="262" y="1060" width="3" height="1" fill="#e04040"/><rect x="260" y="1060" width="2" height="1" fill="#40a040"/><rect x="266" y="1066" width="3" height="1" fill="#e04040"/><rect x="264" y="1066" width="2" height="1" fill="#40a040"/><rect x="262" y="1073" width="3" height="1" fill="#e04040"/><rect x="260" y="1073" width="2" height="1" fill="#40a040"/><rect x="266" y="1079" width="3" height="1" fill="#e04040"/><rect x="264" y="1079" width="2" height="1" fill="#40a040"/><rect x="264" y="1109" width="3" height="1" fill="#e04040"/><rect x="262" y="1109" width="2" height="1" fill="#40a040"/><rect x="258" y="1129" width="3" height="1" fill="#e04040"/><rect x="256" y="1129" width="2" height="1" fill="#40a040"/><rect x="255" y="1150" width="3" height="1" fill="#e04040"/><rect x="253" y="1150" width="2" height="1" fill="#40a040"/><rect x="250" y="1159" width="3" height="1" fill="#e04040"/><rect x="248" y="1159" width="2" height="1" fill="#40a040"/><rect x="246" y="1166" width="3" height="1" fill="#e04040"/><rect x="244" y="1166" width="2" height="1" fill="#40a040"/><rect x="242" y="1173" width="3" height="1" fill="#e04040"/><rect x="240" y="1173" width="2" height="1" fill="#40a040"/><rect x="240" y="1190" width="3" height="1" fill="#e04040"/><rect x="238" y="1190" width="2" height="1" fill="#40a040"/><rect x="237" y="1198" width="3" height="1" fill="#e04040"/><rect x="235" y="1198" width="2" height="1" fill="#40a040"/><rect x="236" y="1210" width="3" height="1" fill="#e04040"/><rect x="234" y="1210" width="2" height="1" fill="#40a040"/></svg>
<div class="a" style="left:514px;top:152px;width:2045px;height:31px;background:#f0f0f0"></div>
<div class="a" style="left:514px;top:182px;width:2045px;height:1px;background:#a8a8a8"></div>
<div class="a" style="left:517px;top:154px;width:287px;height:28px;background:#f3f3f3;border-left:1px solid #e4e4e4;border-top:1px solid #e8e8e8"></div>
<svg class="a" style="left:532px;top:160px" width="17" height="17" viewBox="0 0 17 17"><rect x="0.6" y="0.6" width="13.4" height="13" rx="0.8" fill="#e4fbff" stroke="#2a7ef0" stroke-width="1.2"/><rect x="1" y="1" width="12.8" height="2.2" fill="url(#tbar)"/><rect x="5.6" y="3.6" width="10" height="12" rx="0.6" fill="#f6fbff" stroke="#1e4a8e" stroke-width="1.2"/><path d="M7.5 5.6h3.5M9 7.6h4.6M9 9.6h4.6M7.5 11.6h3.5M9 13.6h4.6" stroke="#4a5560" stroke-width="1.1"/></svg>
<div class="a tab" style="left:612px;top:161px;line-height:20px">IDA View-A</div>
<div class="a" style="left:768px;top:162px;width:14px;height:14px;background:#c8c8c8;border:1px solid #ababab;border-radius:2px"></div><svg class="a" style="left:768px;top:162px" width="14" height="14"><path d="M4.5 4.5 l5 5 M9.5 4.5 l-5 5" stroke="#fff" stroke-width="1.6"/></svg>
<div class="a" style="left:804px;top:152px;width:296px;height:31px;background:#f9f9f9;border:1px solid #e0e0e0;border-bottom:none"></div>
<svg class="a" style="left:824px;top:158px" width="17" height="17" viewBox="0 0 17 17"><rect x="0.6" y="0.6" width="13.4" height="13" rx="0.8" fill="#e4fbff" stroke="#2a7ef0" stroke-width="1.2"/><rect x="1" y="1" width="12.8" height="2.2" fill="url(#tbar)"/><rect x="5.6" y="3.6" width="10" height="12" rx="0.6" fill="#f6fbff" stroke="#1e4a8e" stroke-width="1.2"/><path d="M7.5 5.6h3.5M9 7.6h4.6M9 9.6h4.6M7.5 11.6h3.5M9 13.6h4.6" stroke="#4a5560" stroke-width="1.1"/></svg>
<div class="a tab" style="left:893px;top:160px;line-height:20px">Pseudocode-A</div>
<div class="a" style="left:1061px;top:160px;width:14px;height:14px;background:#e8553a;border:1px solid #c04020;border-radius:1px"></div><svg class="a" style="left:1061px;top:160px" width="14" height="14"><path d="M4 4 l6 6 M10 4 l-6 6" stroke="#fff" stroke-width="1.8"/></svg>
<div class="a" style="left:1100px;top:154px;width:290px;height:28px;background:#f3f3f3;border-left:1px solid #e4e4e4;border-top:1px solid #e8e8e8"></div>
<svg class="a" style="left:1117px;top:160px" width="17" height="17" viewBox="0 0 17 17"><rect x="0.6" y="0.6" width="13.8" height="14" rx="0.8" fill="url(#tbg)" stroke="#2a7ef0" stroke-width="1.2"/><rect x="1" y="1" width="13" height="2.2" fill="url(#tbar)"/><path d="M8 5 l3.6 2 v4 l-3.6 2 l-3.6 -2 v-4z" fill="#e8eaff" stroke="#3a3ae0" stroke-width="1.1"/></svg>
<div class="a tab" style="left:1196px;top:161px;line-height:20px">Hex View-1</div>
<div class="a" style="left:1352px;top:162px;width:14px;height:14px;background:#c8c8c8;border:1px solid #ababab;border-radius:2px"></div><svg class="a" style="left:1352px;top:162px" width="14" height="14"><path d="M4.5 4.5 l5 5 M9.5 4.5 l-5 5" stroke="#fff" stroke-width="1.6"/></svg>
<div class="a" style="left:1390px;top:154px;width:292px;height:28px;background:#f3f3f3;border-left:1px solid #e4e4e4;border-top:1px solid #e8e8e8"></div>
<svg class="a" style="left:1409px;top:160px" width="17" height="17" viewBox="0 0 17 17"><rect x="0.6" y="0.6" width="13.8" height="14" rx="0.8" fill="url(#tbg)" stroke="#2a7ef0" stroke-width="1.2"/><rect x="1" y="1" width="13" height="2.2" fill="url(#tbar)"/><path d="M4.6 13.6 L6.6 5.2 M11.2 13.6 L9.2 5.2 M6.4 5.2 h3 M6.2 7.6 h3.4 M6.8 11.4 l2.6 -3" stroke="#0a2a66" stroke-width="1.5" fill="none"/></svg>
<div class="a tab" style="left:1488px;top:161px;line-height:20px">Structures</div>
<div class="a" style="left:1645px;top:162px;width:14px;height:14px;background:#c8c8c8;border:1px solid #ababab;border-radius:2px"></div><svg class="a" style="left:1645px;top:162px" width="14" height="14"><path d="M4.5 4.5 l5 5 M9.5 4.5 l-5 5" stroke="#fff" stroke-width="1.6"/></svg>
<div class="a" style="left:1682px;top:154px;width:293px;height:28px;background:#f3f3f3;border-left:1px solid #e4e4e4;border-top:1px solid #e8e8e8"></div>
<svg class="a" style="left:1701px;top:160px" width="17" height="17" viewBox="0 0 17 17"><rect x="0.6" y="0.6" width="13.8" height="14" rx="0.8" fill="url(#tbg)" stroke="#2a7ef0" stroke-width="1.2"/><rect x="1" y="1" width="13" height="2.2" fill="url(#tbar)"/><path d="M6.4 4.9 l1.6 1.6 l-1.6 1.6 l-1.6 -1.6z" fill="#20e8ff" stroke="#0a2070" stroke-width="0.9"/><path d="M9.2 6.5h2.6" stroke="#1040c0" stroke-width="1.2"/><path d="M6.4 8.9 l1.6 1.6 l-1.6 1.6 l-1.6 -1.6z" fill="#20e8ff" stroke="#0a2070" stroke-width="0.9"/><path d="M9.2 10.5h2.6" stroke="#1040c0" stroke-width="1.2"/><path d="M6.4 11.9 l1.6 1.6 l-1.6 1.6 l-1.6 -1.6z" fill="#20e8ff" stroke="#0a2070" stroke-width="0.9"/><path d="M9.2 13.5h2.6" stroke="#1040c0" stroke-width="1.2"/></svg>
<div class="a tab" style="left:1802px;top:161px;line-height:20px">Enums</div>
<div class="a" style="left:1937px;top:162px;width:14px;height:14px;background:#c8c8c8;border:1px solid #ababab;border-radius:2px"></div><svg class="a" style="left:1937px;top:162px" width="14" height="14"><path d="M4.5 4.5 l5 5 M9.5 4.5 l-5 5" stroke="#fff" stroke-width="1.6"/></svg>
<div class="a" style="left:1975px;top:154px;width:291px;height:28px;background:#f3f3f3;border-left:1px solid #e4e4e4;border-top:1px solid #e8e8e8"></div>
<svg class="a" style="left:1993px;top:160px" width="17" height="17" viewBox="0 0 17 17"><rect x="0.6" y="0.6" width="13.8" height="14" rx="0.8" fill="url(#tbg)" stroke="#2a7ef0" stroke-width="1.2"/><rect x="1" y="1" width="13" height="2.2" fill="url(#tbar)"/><rect x="6.4" y="5.4" width="9.2" height="10.2" rx="0.6" fill="#f6fbff" stroke="#1e4a8e" stroke-width="1.1"/><path d="M9 7.6h4M9 9.6h4M9 11.6h4M9 13.6h4" stroke="#0a10b0" stroke-width="1.1"/><path d="M1 4.8 L6.8 8.5 L1.6 12.6 L3.6 8.5z" fill="#30d040" stroke="#0a4a14" stroke-width="0.8"/></svg>
<div class="a tab" style="left:2087px;top:161px;line-height:20px">Imports</div>
<div class="a" style="left:2230px;top:162px;width:14px;height:14px;background:#c8c8c8;border:1px solid #ababab;border-radius:2px"></div><svg class="a" style="left:2230px;top:162px" width="14" height="14"><path d="M4.5 4.5 l5 5 M9.5 4.5 l-5 5" stroke="#fff" stroke-width="1.6"/></svg>
<div class="a" style="left:2266px;top:154px;width:293px;height:28px;background:#f3f3f3;border-left:1px solid #e4e4e4;border-top:1px solid #e8e8e8"></div>
<svg class="a" style="left:2286px;top:160px" width="17" height="17" viewBox="0 0 17 17"><g transform="translate(1 0)"><rect x="0.6" y="0.6" width="13.8" height="14" rx="0.8" fill="url(#tbg)" stroke="#2a7ef0" stroke-width="1.2"/><rect x="1" y="1" width="13" height="2.2" fill="url(#tbar)"/></g><rect x="0.5" y="5.4" width="9.2" height="10.2" rx="0.6" fill="#f6fbff" stroke="#1e4a8e" stroke-width="1.1"/><path d="M3 7.6h3.5M3 9.6h3.5M3 11.6h3.5M3 13.6h4" stroke="#0a10b0" stroke-width="1.1"/><path d="M8.5 9.5 Q9 6.5 12 7 V4.8 L15.4 8.5 L12 12 V9.8 Q10 9.6 8.5 11.6z" fill="#30d040" stroke="#0a4a14" stroke-width="0.8"/></svg>
<div class="a tab" style="left:2378px;top:161px;line-height:20px">Exports</div>
<div class="a" style="left:2522px;top:162px;width:14px;height:14px;background:#c8c8c8;border:1px solid #ababab;border-radius:2px"></div><svg class="a" style="left:2522px;top:162px" width="14" height="14"><path d="M4.5 4.5 l5 5 M9.5 4.5 l-5 5" stroke="#fff" stroke-width="1.6"/></svg>
<div class="a" style="left:514px;top:183px;width:2045px;height:1039px;background:#fff"></div>
<div class="a" style="left:578px;top:183px;width:5px;height:1039px;background:#efefef"></div>
<div class="a" style="left:583px;top:529px;width:1950px;height:23px;background:#e4e4e4"></div>
<div class="a" style="left:2533px;top:183px;width:26px;height:1039px;background:#efefef"></div>
<div class="a" style="left:2544px;top:499px;width:5px;height:231px;background:#878787;border-radius:3px"></div>
<div class="a" style="left:923px;top:530px;width:2px;height:21px;background:#000"></div>
<div class="a" style="left:0;top:0;width:2533px;height:1204px;overflow:hidden"><div class="a code" style="left:913px;top:186px">while ( 1 )</div><div class="a ln" style="left:516px;top:186px">56</div><div class="a dot" style="left:521.5px;top:188px"></div><div class="a code" style="left:913px;top:209px">{</div><div class="a ln" style="left:516px;top:209px">57</div><div class="a code" style="left:935px;top:232px">while ( 1 )</div><div class="a ln" style="left:516px;top:232px">58</div><div class="a dot" style="left:521.5px;top:234px"></div><div class="a code" style="left:935px;top:255px">{</div><div class="a ln" style="left:516px;top:255px">59</div><div class="a code" style="left:957px;top:278px">while ( 1 )</div><div class="a ln" style="left:516px;top:278px">60</div><div class="a dot" style="left:521.5px;top:280px"></div><div class="a code" style="left:957px;top:301px">{</div><div class="a ln" style="left:516px;top:301px">61</div><div class="a code" style="left:979px;top:324px">while ( <span class="v">i</span> == -1935703272 )</div><div class="a ln" style="left:516px;top:324px">62</div><div class="a dot" style="left:521.5px;top:326px"></div><div class="a code" style="left:1001px;top:347px"><span class="v">i</span> = 691708170;</div><div class="a ln" style="left:516px;top:347px">63</div><div class="a dot" style="left:521.5px;top:349px"></div><div class="a code" style="left:979px;top:370px">if ( <span class="v">i</span> != -1470321493 )</div><div class="a ln" style="left:516px;top:370px">64</div><div class="a dot" style="left:521.5px;top:372px"></div><div class="a code" style="left:1001px;top:393px">break;</div><div class="a ln" style="left:516px;top:393px">65</div><div class="a dot" style="left:521.5px;top:395px"></div><div class="a code" style="left:979px;top:416px"><span class="v">v15</span> = (<span class="o">v18</span> &gt;&gt; 2) &amp; 3;</div><div class="a ln" style="left:516px;top:416px">66</div><div class="a dot" style="left:521.5px;top:418px"></div><div class="a code" style="left:979px;top:439px"><span class="v">v17</span> = <span class="v">v21</span> - 1;</div><div class="a ln" style="left:516px;top:439px">67</div><div class="a dot" style="left:521.5px;top:441px"></div><div class="a code" style="left:979px;top:462px"><span class="v">i</span> = 976382095;</div><div class="a ln" style="left:516px;top:462px">68</div><div class="a dot" style="left:521.5px;top:464px"></div><div class="a code" style="left:957px;top:485px">}</div><div class="a ln" style="left:516px;top:485px">69</div><div class="a code" style="left:957px;top:508px">if ( <span class="v">i</span> != -1220524685 )</div><div class="a ln" style="left:516px;top:508px">70</div><div class="a dot" style="left:521.5px;top:510px"></div><div class="a code" style="left:979px;top:531px">break;</div><div class="a ln" style="left:516px;top:531px">71</div><div class="a dot" style="left:521.5px;top:533px"></div><div class="a code" style="left:957px;top:554px"><span class="v">v4</span> = 1306391833;</div><div class="a ln" style="left:516px;top:554px">72</div><div class="a dot" style="left:521.5px;top:556px"></div><div class="a code" style="left:957px;top:577px">if ( <span class="o">v17</span> &lt; <span class="v">v21</span> - 1 )</div><div class="a ln" style="left:516px;top:577px">73</div><div class="a dot" style="left:521.5px;top:579px"></div><div class="a code" style="left:979px;top:600px"><span class="v">v4</span> = 916742856;</div><div class="a ln" style="left:516px;top:600px">74</div><div class="a dot" style="left:521.5px;top:602px"></div><div class="a code" style="left:957px;top:623px"><span class="v">i</span> = <span class="v">v4</span>;</div><div class="a ln" style="left:516px;top:623px">75</div><div class="a dot" style="left:521.5px;top:625px"></div><div class="a code" style="left:935px;top:646px">}</div><div class="a ln" style="left:516px;top:646px">76</div><div class="a code" style="left:935px;top:669px">if ( <span class="v">i</span> != -681142515 )</div><div class="a ln" style="left:516px;top:669px">77</div><div class="a dot" style="left:521.5px;top:671px"></div><div class="a code" style="left:957px;top:692px">break;</div><div class="a ln" style="left:516px;top:692px">78</div><div class="a dot" style="left:521.5px;top:694px"></div><div class="a code" style="left:935px;top:715px"><span class="v">i</span> = 1558272717;</div><div class="a ln" style="left:516px;top:715px">79</div><div class="a dot" style="left:521.5px;top:717px"></div><div class="a code" style="left:913px;top:738px">}</div><div class="a ln" style="left:516px;top:738px">80</div><div class="a code" style="left:913px;top:761px">if ( <span class="v">i</span> != -604342382 )</div><div class="a ln" style="left:516px;top:761px">81</div><div class="a dot" style="left:521.5px;top:763px"></div><div class="a code" style="left:935px;top:784px">break;</div><div class="a ln" style="left:516px;top:784px">82</div><div class="a dot" style="left:521.5px;top:786px"></div><div class="a code" style="left:913px;top:807px"><span class="v">v19</span> = <span class="v">a1</span>[<span class="v">v21</span> - 1];</div><div class="a ln" style="left:516px;top:807px">83</div><div class="a dot" style="left:521.5px;top:809px"></div><div class="a code" style="left:913px;top:830px"><span class="v">v12</span> = *<span class="v">a1</span></div><div class="a ln" style="left:516px;top:830px">84</div><div class="a dot" style="left:521.5px;top:832px"></div><div class="a code" style="left:957px;top:853px">- (((<span class="v">v19</span> ^ *(<span class="g">_DWORD</span> <span class="g">*</span>)(<span class="v">a3</span> + 4i64 * (<span class="o">v15</span> ^ <span class="o">v17</span> &amp; 3))) + (<span class="o">v20</span> ^ <span class="o">v18</span>)) ^ (((16 * <span class="v">v19</span>) ^ (<span class="o">v20</span> &gt;&gt; 3)) + ((4 * <span class="o">v20</span>) ^ (<span class="v">v19</span> &gt;&gt; 5))));</div><div class="a ln" style="left:516px;top:853px">85</div><div class="a code" style="left:913px;top:876px">*<span class="v">a1</span> = <span class="v">v12</span>;</div><div class="a ln" style="left:516px;top:876px">86</div><div class="a dot" style="left:521.5px;top:878px"></div><div class="a code" style="left:913px;top:899px"><span class="v">v20</span> = <span class="v">v12</span>;</div><div class="a ln" style="left:516px;top:899px">87</div><div class="a dot" style="left:521.5px;top:901px"></div><div class="a code" style="left:913px;top:922px"><span class="v">v18</span> += 1640531527;</div><div class="a ln" style="left:516px;top:922px">88</div><div class="a dot" style="left:521.5px;top:924px"></div><div class="a code" style="left:913px;top:945px"><span class="v">i</span> = 1093432886;</div><div class="a ln" style="left:516px;top:945px">89</div><div class="a dot" style="left:521.5px;top:947px"></div><div class="a code" style="left:891px;top:968px">}</div><div class="a ln" style="left:516px;top:968px">90</div><div class="a code" style="left:891px;top:991px">if ( <span class="v">i</span> != 58163272 )</div><div class="a ln" style="left:516px;top:991px">91</div><div class="a dot" style="left:521.5px;top:993px"></div><div class="a code" style="left:913px;top:1014px">break;</div><div class="a ln" style="left:516px;top:1014px">92</div><div class="a dot" style="left:521.5px;top:1016px"></div><div class="a code" style="left:891px;top:1037px"><span class="v">v21</span> = -<span class="v">v21</span>;</div><div class="a ln" style="left:516px;top:1037px">93</div><div class="a dot" style="left:521.5px;top:1039px"></div><div class="a code" style="left:891px;top:1060px"><span class="v">v16</span> = 52 / <span class="v">v21</span> + 6;</div><div class="a ln" style="left:516px;top:1060px">94</div><div class="a dot" style="left:521.5px;top:1062px"></div><div class="a code" style="left:891px;top:1083px"><span class="v">v18</span> = -1640531527 * <span class="v">v16</span>;</div><div class="a ln" style="left:516px;top:1083px">95</div><div class="a dot" style="left:521.5px;top:1085px"></div><div class="a code" style="left:891px;top:1106px"><span class="v">v20</span> = *<span class="v">a1</span>;</div><div class="a ln" style="left:516px;top:1106px">96</div><div class="a dot" style="left:521.5px;top:1108px"></div><div class="a code" style="left:891px;top:1129px"><span class="v">i</span> = -1470321493;</div><div class="a ln" style="left:516px;top:1129px">97</div><div class="a dot" style="left:521.5px;top:1131px"></div><div class="a code" style="left:869px;top:1152px">}</div><div class="a ln" style="left:516px;top:1152px">98</div><div class="a code" style="left:869px;top:1175px">if ( <span class="v">i</span> != 232353665 )</div><div class="a ln" style="left:516px;top:1175px">99</div><div class="a dot" style="left:521.5px;top:1177px"></div><div class="a code" style="left:891px;top:1198px">break;</div></div>
<div class="a" style="left:579px;top:1204px;width:1954px;height:18px;background:#efefef"></div>
<div class="a" style="left:674px;top:1206px;width:1px;height:16px;background:#d8d8d8"></div>
<div class="a" style="left:987px;top:1206px;width:1px;height:16px;background:#d8d8d8"></div>
<div class="a" style="left:1005px;top:1206px;width:1px;height:16px;background:#d8d8d8"></div>
<div class="a code" style="left:586px;top:1207px;color:#202020;font-size:18.33px;letter-spacing:0;-webkit-text-stroke:0">00000C9C</div>
<div class="a code" style="left:679px;top:1207px;color:#202020;font-size:18.2px;letter-spacing:0;-webkit-text-stroke:0">sub_140001470:71 (14000189C)</div>
</body></html>
